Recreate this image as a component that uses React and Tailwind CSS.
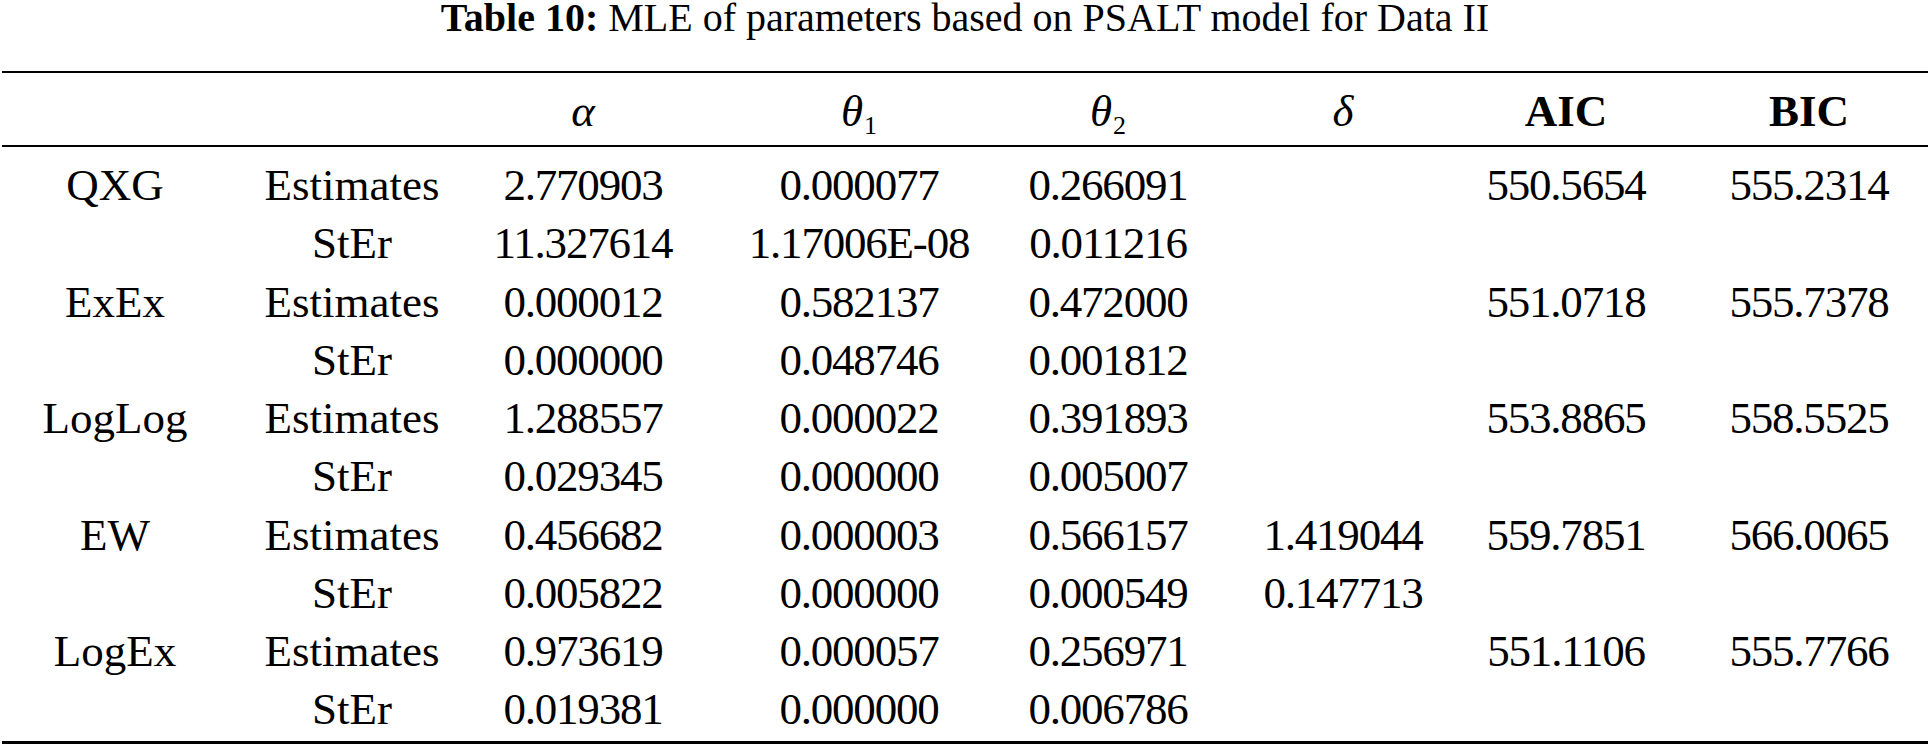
// @ts-nocheck
const rows = [
  ['QXG', 'Estimates', '2.770903', '0.000077', '0.266091', '', '550.5654', '555.2314'],
  ['', 'StEr', '11.327614', '1.17006E-08', '0.011216', '', '', ''],
  ['ExEx', 'Estimates', '0.000012', '0.582137', '0.472000', '', '551.0718', '555.7378'],
  ['', 'StEr', '0.000000', '0.048746', '0.001812', '', '', ''],
  ['LogLog', 'Estimates', '1.288557', '0.000022', '0.391893', '', '553.8865', '558.5525'],
  ['', 'StEr', '0.029345', '0.000000', '0.005007', '', '', ''],
  ['EW', 'Estimates', '0.456682', '0.000003', '0.566157', '1.419044', '559.7851', '566.0065'],
  ['', 'StEr', '0.005822', '0.000000', '0.000549', '0.147713', '', ''],
  ['LogEx', 'Estimates', '0.973619', '0.000057', '0.256971', '', '551.1106', '555.7766'],
  ['', 'StEr', '0.019381', '0.000000', '0.006786', '', '', ''],
];

// column tracks chosen so that each column's centre sits where the original does
const cols = 'grid grid-cols-[230px_244px_218px_334px_164px_306px_140px_1fr]';

function Cell({ children, last, num }) {
  return (
    <div
      className={
        'flex justify-center whitespace-nowrap ' +
        (last ? 'pl-[52px] ' : '') +
        (num ? 'tracking-[-1.2px]' : '')
      }
    >
      {children}
    </div>
  );
}

function Theta({ n }) {
  return (
    <span className="italic">
      θ<span className="not-italic text-[26px] relative top-[8px] ml-[1px]">{n}</span>
    </span>
  );
}

export default function App() {
  return (
    <div
      className="w-[1930px] h-[746px] overflow-hidden bg-white text-black"
      style={{ fontFamily: '"Liberation Serif", "Times New Roman", serif' }}
    >
      {/* caption */}
      <div className="text-center text-[40px] leading-[34px] pt-[1px] mb-[36px]">
        <span className="font-bold">Table 10:</span> MLE of parameters based on PSALT model for Data II
      </div>

      <div className="mx-[2px] border-t-2 border-black" />

      {/* header */}
      <div className={cols + ' text-[45px] h-[72px] pt-[4px] leading-[68px]'}>
        <Cell />
        <Cell />
        <Cell><span className="italic">α</span></Cell>
        <Cell><Theta n="1" /></Cell>
        <Cell><Theta n="2" /></Cell>
        <Cell><span className="italic">δ</span></Cell>
        <Cell><span className="font-bold">AIC</span></Cell>
        <Cell last><span className="font-bold">BIC</span></Cell>
      </div>

      <div className="mx-[2px] border-t-2 border-black" />

      {/* body */}
      <div className="pt-[9px] text-[45px] leading-[58.25px]">
        {rows.map((r, i) => (
          <div key={i} className={cols}>
            {r.map((v, j) => (
              <Cell key={j} last={j === 7} num={j >= 2}>{v}</Cell>
            ))}
          </div>
        ))}
      </div>

      <div className="mx-[2px] mt-[2px] border-t-[3px] border-black" />
    </div>
  );
}
